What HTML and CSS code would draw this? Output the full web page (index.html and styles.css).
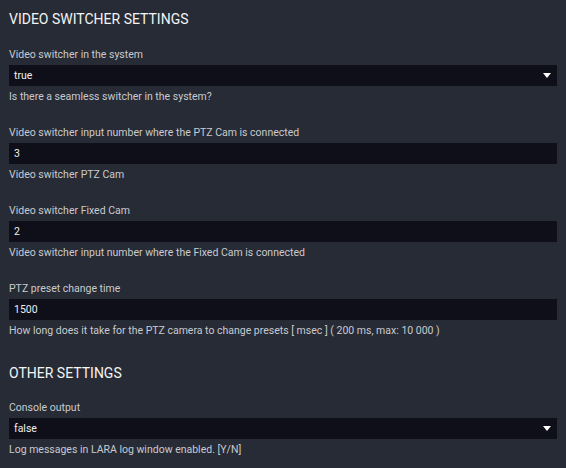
FILE: index.html
```html
<!DOCTYPE html>
<html lang="en">
<head>
    <meta charset="UTF-8">
    <meta name="viewport" content="width=device-width, initial-scale=1.0">
    <title>Settings</title>
    <link rel="stylesheet" href="styles.css">
</head>
<body>

    <div class="settings">
        <h2>VIDEO SWITCHER SETTINGS</h2>

        <div class="field">
            <label>Video switcher in the system</label>
            <div class="select">
                <span>true</span>
                <span class="caret"></span>
            </div>
            <p class="help">Is there a seamless switcher in the system?</p>
        </div>

        <div class="field">
            <label>Video switcher input number where the PTZ Cam is connected</label>
            <div class="input">3</div>
            <p class="help">Video switcher PTZ Cam</p>
        </div>

        <div class="field">
            <label>Video switcher Fixed Cam</label>
            <div class="input">2</div>
            <p class="help">Video switcher input number where the Fixed Cam is connected</p>
        </div>

        <div class="field">
            <label>PTZ preset change time</label>
            <div class="input">1500</div>
            <p class="help">How long does it take for the PTZ camera to change presets [ msec ] ( 200 ms, max: 10 000 )</p>
        </div>

        <h2 class="second">OTHER SETTINGS</h2>

        <div class="field">
            <label>Console output</label>
            <div class="select">
                <span>false</span>
                <span class="caret"></span>
            </div>
            <p class="help">Log messages in LARA log window enabled. [Y/N]</p>
        </div>
    </div>

</body>
</html>
```

FILE: styles.css
```css
body {
    font-family: Roboto, "Liberation Sans", sans-serif;
    background-color: #272b35;
    color: #c8cacf;
    margin: 0;
    padding: 0;
}

.settings {
    padding: 10px 9px 0 9px;
}

h2 {
    font-size: 14px;
    font-weight: 400;
    color: #f4f4f4;
    margin: 0 0 20px 0;
    line-height: 18px;
}

h2.second {
    margin-top: 27px;
    margin-bottom: 19px;
}

.field {
    margin-bottom: 23px;
}

label {
    display: block;
    font-size: 10.5px;
    line-height: 13px;
    margin-bottom: 4px;
}

.input,
.select {
    height: 21px;
    line-height: 21px;
    background-color: #0f0f19;
    color: #eeeeee;
    font-size: 10.5px;
    padding: 0 5px;
    box-sizing: border-box;
}

.select {
    display: flex;
    justify-content: space-between;
    align-items: center;
}

.caret {
    width: 0;
    height: 0;
    border-left: 4px solid transparent;
    border-right: 4px solid transparent;
    border-top: 5px solid #ffffff;
    margin-right: 1px;
}

.help {
    font-size: 10.5px;
    line-height: 13px;
    margin: 4px 0 0 0;
}
```
